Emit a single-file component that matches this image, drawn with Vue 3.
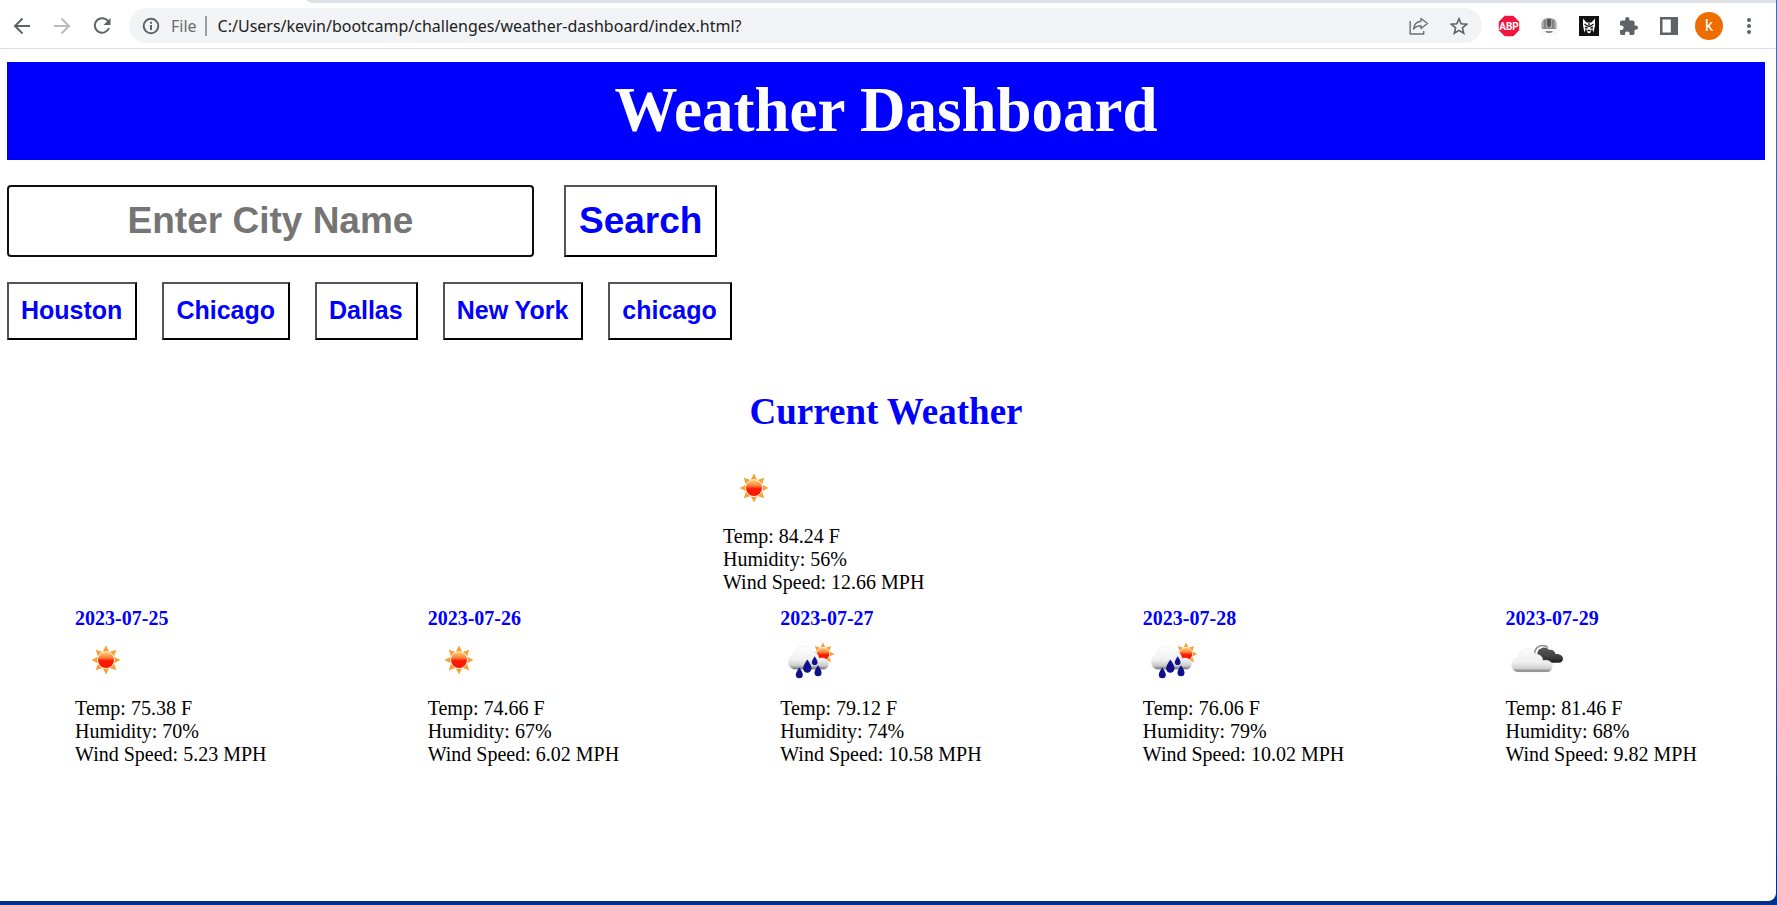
<script setup>
import { ref } from 'vue'

const address = ref('C:/Users/kevin/bootcamp/challenges/weather-dashboard/index.html?')
const city = ref('')
const history = ['Houston', 'Chicago', 'Dallas', 'New York', 'chicago']
const current = { temp: '84.24', humidity: 56, wind: '12.66' }
const forecast = [
  { date: '2023-07-25', icon: 'sun', temp: '75.38', humidity: 70, wind: '5.23' },
  { date: '2023-07-26', icon: 'sun', temp: '74.66', humidity: 67, wind: '6.02' },
  { date: '2023-07-27', icon: 'rain', temp: '79.12', humidity: 74, wind: '10.58' },
  { date: '2023-07-28', icon: 'rain', temp: '76.06', humidity: 79, wind: '10.02' },
  { date: '2023-07-29', icon: 'clouds', temp: '81.46', humidity: 68, wind: '9.82' },
]
</script>

<template>
  <div class="desktop">
    <svg class="defs" width="0" height="0" aria-hidden="true">
      <defs>
        <linearGradient id="disc" x1="0" y1="0" x2="0" y2="1">
          <stop offset="0" stop-color="#fdd07a" />
          <stop offset="0.35" stop-color="#f9843a" />
          <stop offset="0.55" stop-color="#fb1a06" />
          <stop offset="1" stop-color="#fe1400" />
        </linearGradient>
        <linearGradient id="white-cloud" gradientUnits="userSpaceOnUse" x1="0" y1="18" x2="0" y2="43">
          <stop offset="0" stop-color="#fdfdfd" />
          <stop offset="0.6" stop-color="#f0f0f0" />
          <stop offset="0.85" stop-color="#d4d4d4" />
          <stop offset="1" stop-color="#6e6e6e" />
        </linearGradient>
        <linearGradient id="rain-cloud" gradientUnits="userSpaceOnUse" x1="0" y1="17" x2="0" y2="40">
          <stop offset="0" stop-color="#fefefe" />
          <stop offset="0.6" stop-color="#f0f0f0" />
          <stop offset="0.85" stop-color="#cccccc" />
          <stop offset="1" stop-color="#777777" />
        </linearGradient>
        <linearGradient id="dark-cloud" gradientUnits="userSpaceOnUse" x1="0" y1="17" x2="0" y2="34">
          <stop offset="0" stop-color="#5c5c5c" />
          <stop offset="0.6" stop-color="#424242" />
          <stop offset="1" stop-color="#1c1c1c" />
        </linearGradient>
        <symbol id="sun" viewBox="0 0 62 62">
          <g fill="#f9a034">
            <path id="ray" d="M31 16.500l3.200 6.300q-3.200-1.200-6.400 0z" />
            <use href="#ray" transform="rotate(45 31 31)" />
            <use href="#ray" transform="rotate(90 31 31)" />
            <use href="#ray" transform="rotate(135 31 31)" />
            <use href="#ray" transform="rotate(180 31 31)" />
            <use href="#ray" transform="rotate(225 31 31)" />
            <use href="#ray" transform="rotate(270 31 31)" />
            <use href="#ray" transform="rotate(315 31 31)" />
          </g>
          <circle cx="31" cy="31" r="8" fill="url(#disc)" />
        </symbol>
        <symbol id="rain" viewBox="0 0 62 62">
          <use href="#sun" x="18.500" y="0.500" width="49" height="49" />
          <path
            d="M14 40.500a6.500 6.500 0 0 1-5.500-7c0-4 2-7 5.500-7.500.5-5.500 4-9 9-9 4.500 0 7.500 2.500 8.500 6 4.500-.5 7 2.500 7.500 6.500 5.500-1.500 9.500 1 9.500 5.500 0 3.500-2.500 5.500-5.500 5.500z"
            fill="url(#rain-cloud)" stroke="#e4e4e4" stroke-width="0.500"
          />
          <g fill="#10108c">
            <path d="M27.300 30.500q4.200 6 4.200 9a4.200 4.200 0 0 1-8.400 0q0-3 4.200-9z" />
            <path d="M34.700 27.200q2.800 4 2.800 6a2.800 2.800 0 0 1-5.600 0q0-2 2.800-6z" />
            <path d="M19.300 38.500q3.500 5 3.500 7.300a3.500 3.500 0 0 1-7 0q0-2.300 3.500-7.300z" />
            <path d="M38 36.300q3.500 5 3.500 7.500a3.500 3.500 0 0 1-7 0q0-2.500 3.500-7.500z" />
          </g>
        </symbol>
        <symbol id="clouds" viewBox="0 0 62 62">
          <path d="M29.500 25c0-5 3.500-8.500 8-8.500 2.500 0 4 .5 5.500 2" fill="none" stroke="#8b8b8b" stroke-width="1.500" />
          <path
            d="M34 30.500c-2-5-2.500-8.500 1-10.500 3-2.500 7-2 9 .8 3.500-.6 6 1.200 6.500 4.200 4-.3 7.500 1.500 7.500 4.700 0 2.800-2 4-4.500 4H40z"
            fill="url(#dark-cloud)"
          />
          <path
            d="M12.500 43a6 6 0 0 1-5.800-6.500c0-4 2-7 6-7.500.3-5.500 4-9.500 8.800-9.500 4.500 0 7.500 2.500 8.500 6.200 4.500-.7 7.500 1.300 8 6 5.500-1.500 9.300 1.300 9.300 5.500 0 3.500-2 5.800-5.300 5.800z"
            fill="url(#white-cloud)" stroke="#e8e8e8" stroke-width="0.500"
          />
        </symbol>
      </defs>
    </svg>

    <div class="window">
      <div class="tabs"><div class="tab-strip"></div></div>
      <header class="toolbar">
        <button class="tool" type="button" aria-label="Back">
          <svg width="18" height="18" viewBox="0 0 18 18" fill="none" stroke="#5f6368" stroke-width="2"><path d="M17 9H2M9.500 1.500L2 9l7.500 7.500" /></svg>
        </button>
        <button class="tool" type="button" aria-label="Forward" disabled>
          <svg width="18" height="18" viewBox="0 0 18 18" fill="none" stroke="#babcbe" stroke-width="2"><path d="M1 9h15M8.500 1.500L16 9l-7.500 7.500" /></svg>
        </button>
        <button class="tool" type="button" aria-label="Reload">
          <svg width="18" height="18" viewBox="0 0 18 18" fill="none"><path d="M15.300 4.500A7.300 7.300 0 1 0 16 11" stroke="#5f6368" stroke-width="2" /><path d="M17.500 1v7h-7z" fill="#5f6368" /></svg>
        </button>
        <div class="omnibox">
          <button class="tool" type="button" aria-label="Site information">
            <svg width="18" height="18" viewBox="0 0 18 18" fill="none" stroke="#5f6368" stroke-width="2"><circle cx="9" cy="9" r="7.300" /><path d="M9 8v5M9 4.800v2" /></svg>
          </button>
          <label class="scheme" for="address">File</label>
          <span class="divider"></span>
          <input id="address" v-model="address" class="address" type="text" spellcheck="false">
          <button class="tool" type="button" aria-label="Share">
            <svg width="20" height="18" viewBox="0 0 20 18" fill="none" stroke="#6b6f73" stroke-width="1.400" stroke-linejoin="round"><path d="M1.200 4v13h13.500v-3M12 1.500l6.500 5-6.500 5V8.700c-3.500 0-5.700 1-7.500 3.300.5-4.200 3-7.200 7.500-7.700z" /></svg>
          </button>
          <button class="tool" type="button" aria-label="Bookmark">
            <svg width="18" height="18" viewBox="0 0 18 18" fill="none" stroke="#5f6368" stroke-width="1.600"><path d="M9 1.800l2.100 5 5.500.5-4.200 3.600 1.300 5.400L9 13.400l-4.700 2.900 1.300-5.400-4.200-3.600 5.500-.5z" /></svg>
          </button>
        </div>
        <button class="tool first-extension" type="button" aria-label="Adblock Plus">
          <svg width="22" height="22" viewBox="0 0 22 22"><path d="M6.700.800h8.600l5.900 5.900v8.600l-5.900 5.900H6.700L.800 15.300V6.700z" fill="#f0163f" /><text class="abp" x="11" y="14.500" text-anchor="middle">ABP</text></svg>
        </button>
        <button class="tool" type="button" aria-label="Helmet extension">
          <svg width="18" height="18" viewBox="0 0 18 18"><path d="M0 0h18v18H0z" fill="#f8f8f8" /><path d="M1.500 11V7c0-4 3-6 7.500-6s7.500 2 7.500 6v4z" fill="#a5a5a5" /><path d="M5 11V3M13 11V3" stroke="#777" stroke-width="1.500" /><path d="M7 2h4v6l-2 3-2-3z" fill="#555" /><path d="M2 11h14v1H2zM5 14h8l-2 2H7z" fill="#888" /></svg>
        </button>
        <button class="tool" type="button" aria-label="Wolf extension">
          <svg width="20" height="20" viewBox="0 0 20 20"><path d="M0 0h20v20H0z" fill="#111" /><path d="M4 2.500l3.500 4h5l3.500-4v7l-1.500 7-1.500-4-1.500 4-1.500 1-1.500-1-1.500-4-1.500 4L4 9.500z" fill="#fff" /><path d="M5.500 8l3.500 2.500M14.500 8L11 10.500M6 11.500l2.500.5M14 11.500l-2.500.5M10 7v4M8.500 14.500h3" stroke="#111" stroke-width="1.300" /></svg>
        </button>
        <button class="tool" type="button" aria-label="Extensions">
          <svg width="18" height="18" viewBox="2 1 21 21"><path d="M20.500 11H19V7a2 2 0 0 0-2-2h-4V3.500a2.500 2.500 0 0 0-5 0V5H4a2 2 0 0 0-2 2v3.800h1.500a2.700 2.700 0 0 1 0 5.400H2V20a2 2 0 0 0 2 2h3.800v-1.500a2.700 2.700 0 0 1 5.400 0V22H17a2 2 0 0 0 2-2v-4h1.500a2.500 2.500 0 0 0 0-5z" fill="#5f6368" /></svg>
        </button>
        <button class="tool" type="button" aria-label="Side panel">
          <svg width="18" height="18" viewBox="0 0 18 18"><path d="M0 0h18v18H0zM2.500 2.500v13h8.300v-13z" fill="#5f6368" fill-rule="evenodd" /></svg>
        </button>
        <button class="tool" type="button" aria-label="Profile"><span class="avatar">k</span></button>
        <button class="tool" type="button" aria-label="Menu">
          <svg width="4" height="16" viewBox="0 0 4 16" fill="#5f6368"><circle cx="2" cy="2" r="2" /><circle cx="2" cy="8" r="2" /><circle cx="2" cy="14" r="2" /></svg>
        </button>
      </header>

      <main class="page">
        <h1 class="banner">Weather Dashboard</h1>
        <form class="search" @submit.prevent>
          <input v-model="city" class="city" type="text" placeholder="Enter City Name" aria-label="City name">
          <button class="action large" type="submit">Search</button>
        </form>
        <nav class="history" aria-label="Recent cities">
          <button v-for="name in history" :key="name" class="action" type="button">{{ name }}</button>
        </nav>

        <h2 class="heading">Current Weather</h2>
        <section class="current">
          <svg class="icon" role="img" aria-label="Clear"><use href="#sun" /></svg>
          <p>Temp: {{ current.temp }} F</p>
          <p>Humidity: {{ current.humidity }}%</p>
          <p>Wind Speed: {{ current.wind }} MPH</p>
        </section>

        <section class="forecast">
          <article v-for="day in forecast" :key="day.date">
            <h3 class="date">{{ day.date }}</h3>
            <svg class="icon" role="img" :aria-label="day.icon"><use :href="'#' + day.icon" /></svg>
            <p>Temp: {{ day.temp }} F</p>
            <p>Humidity: {{ day.humidity }}%</p>
            <p>Wind Speed: {{ day.wind }} MPH</p>
          </article>
        </section>
      </main>
    </div>
  </div>
</template>

<style>
body {
  margin: 0;
}
</style>

<style scoped>
* {
  box-sizing: border-box;
}
.desktop {
  display: flex;
  min-height: 100vh;
  padding: 0 1px 4px 0;
  background: linear-gradient(#3f69bd, #47568a 70%, #02308c 98%);
}
.defs {
  position: absolute;
}
.window {
  flex: 1;
  min-width: 0;
  background: #fff;
  border-bottom-right-radius: 8px;
}
.tabs {
  height: 3px;
  padding-left: 307px;
}
.tab-strip {
  height: 3px;
  background: #dee1e6;
  border-bottom-left-radius: 6px 3px;
}
.toolbar {
  display: flex;
  align-items: center;
  height: 46px;
  padding: 0 7px 0 2px;
  border-bottom: 1px solid #dadce0;
}
.tool {
  display: flex;
  flex: none;
  align-items: center;
  justify-content: center;
  width: 40px;
  height: 34px;
  padding: 0;
  border: 0;
  background: none;
}
.first-extension {
  margin-left: 7px;
}
.omnibox {
  display: flex;
  flex: 1;
  align-items: center;
  min-width: 0;
  height: 35px;
  margin-left: 7px;
  padding: 0 3px 0 2px;
  border-radius: 18px;
  background: #f1f3f4;
  font: 16px/24px "Noto Sans", "Open Sans", sans-serif;
}
.scheme {
  color: #6b6f73;
}
.divider {
  width: 2px;
  height: 20px;
  margin: 0 11px 0 8px;
  background: #9a9da1;
}
.address {
  flex: 1;
  min-width: 0;
  padding: 0;
  border: 0;
  outline: 0;
  background: none;
  color: #202124;
  font: inherit;
}
.abp {
  fill: #fff;
  font: bold 10px Roboto, sans-serif;
}
.avatar {
  width: 28px;
  height: 28px;
  border-radius: 50%;
  background: #ef6c00;
  color: #fff;
  font: 16px/28px Roboto, sans-serif;
  text-align: center;
}
.page {
  padding: 13px 11px 0 7px;
  color: #000;
  font: 20px/23px "Liberation Serif", "Times New Roman", serif;
}
.banner {
  margin: 0;
  padding: 12px 12px 14px;
  background: #00f;
  color: #fff;
  font-size: 63px;
  line-height: 72px;
  text-align: center;
}
.search {
  display: flex;
  gap: 30px;
  margin-top: 25px;
}
.city {
  width: 527px;
  height: 72px;
  border: 2px solid #101010;
  border-radius: 4px;
  outline: 0;
  background: #fff;
  font: bold 37px "Liberation Sans", Arial, sans-serif;
  text-align: center;
}
.city::placeholder {
  color: #757575;
}
.history {
  display: flex;
  flex-wrap: wrap;
  gap: 25px;
  margin-top: 25px;
}
.action {
  height: 58px;
  padding: 0 13px 1px 12px;
  border: 2px outset #000;
  background: #fff;
  color: #00f;
  font: bold 25px "Liberation Sans", Arial, sans-serif;
}
.large {
  height: 72px;
  padding: 0 13px;
  font-size: 37px;
}
.heading {
  margin: 51px 0 24px;
  color: #00f;
  font-size: 37px;
  line-height: 42px;
  text-align: center;
}
.current {
  width: 326px;
  margin: 0 auto;
}
.icon {
  display: block;
  width: 62px;
  height: 62px;
  margin-bottom: 6px;
}
p {
  margin: 0;
}
.forecast {
  display: flex;
  justify-content: space-around;
  gap: 25px;
  margin-top: 13px;
}
.date {
  margin: 0;
  color: #00f;
  font-size: 20px;
  line-height: 22px;
}
</style>
